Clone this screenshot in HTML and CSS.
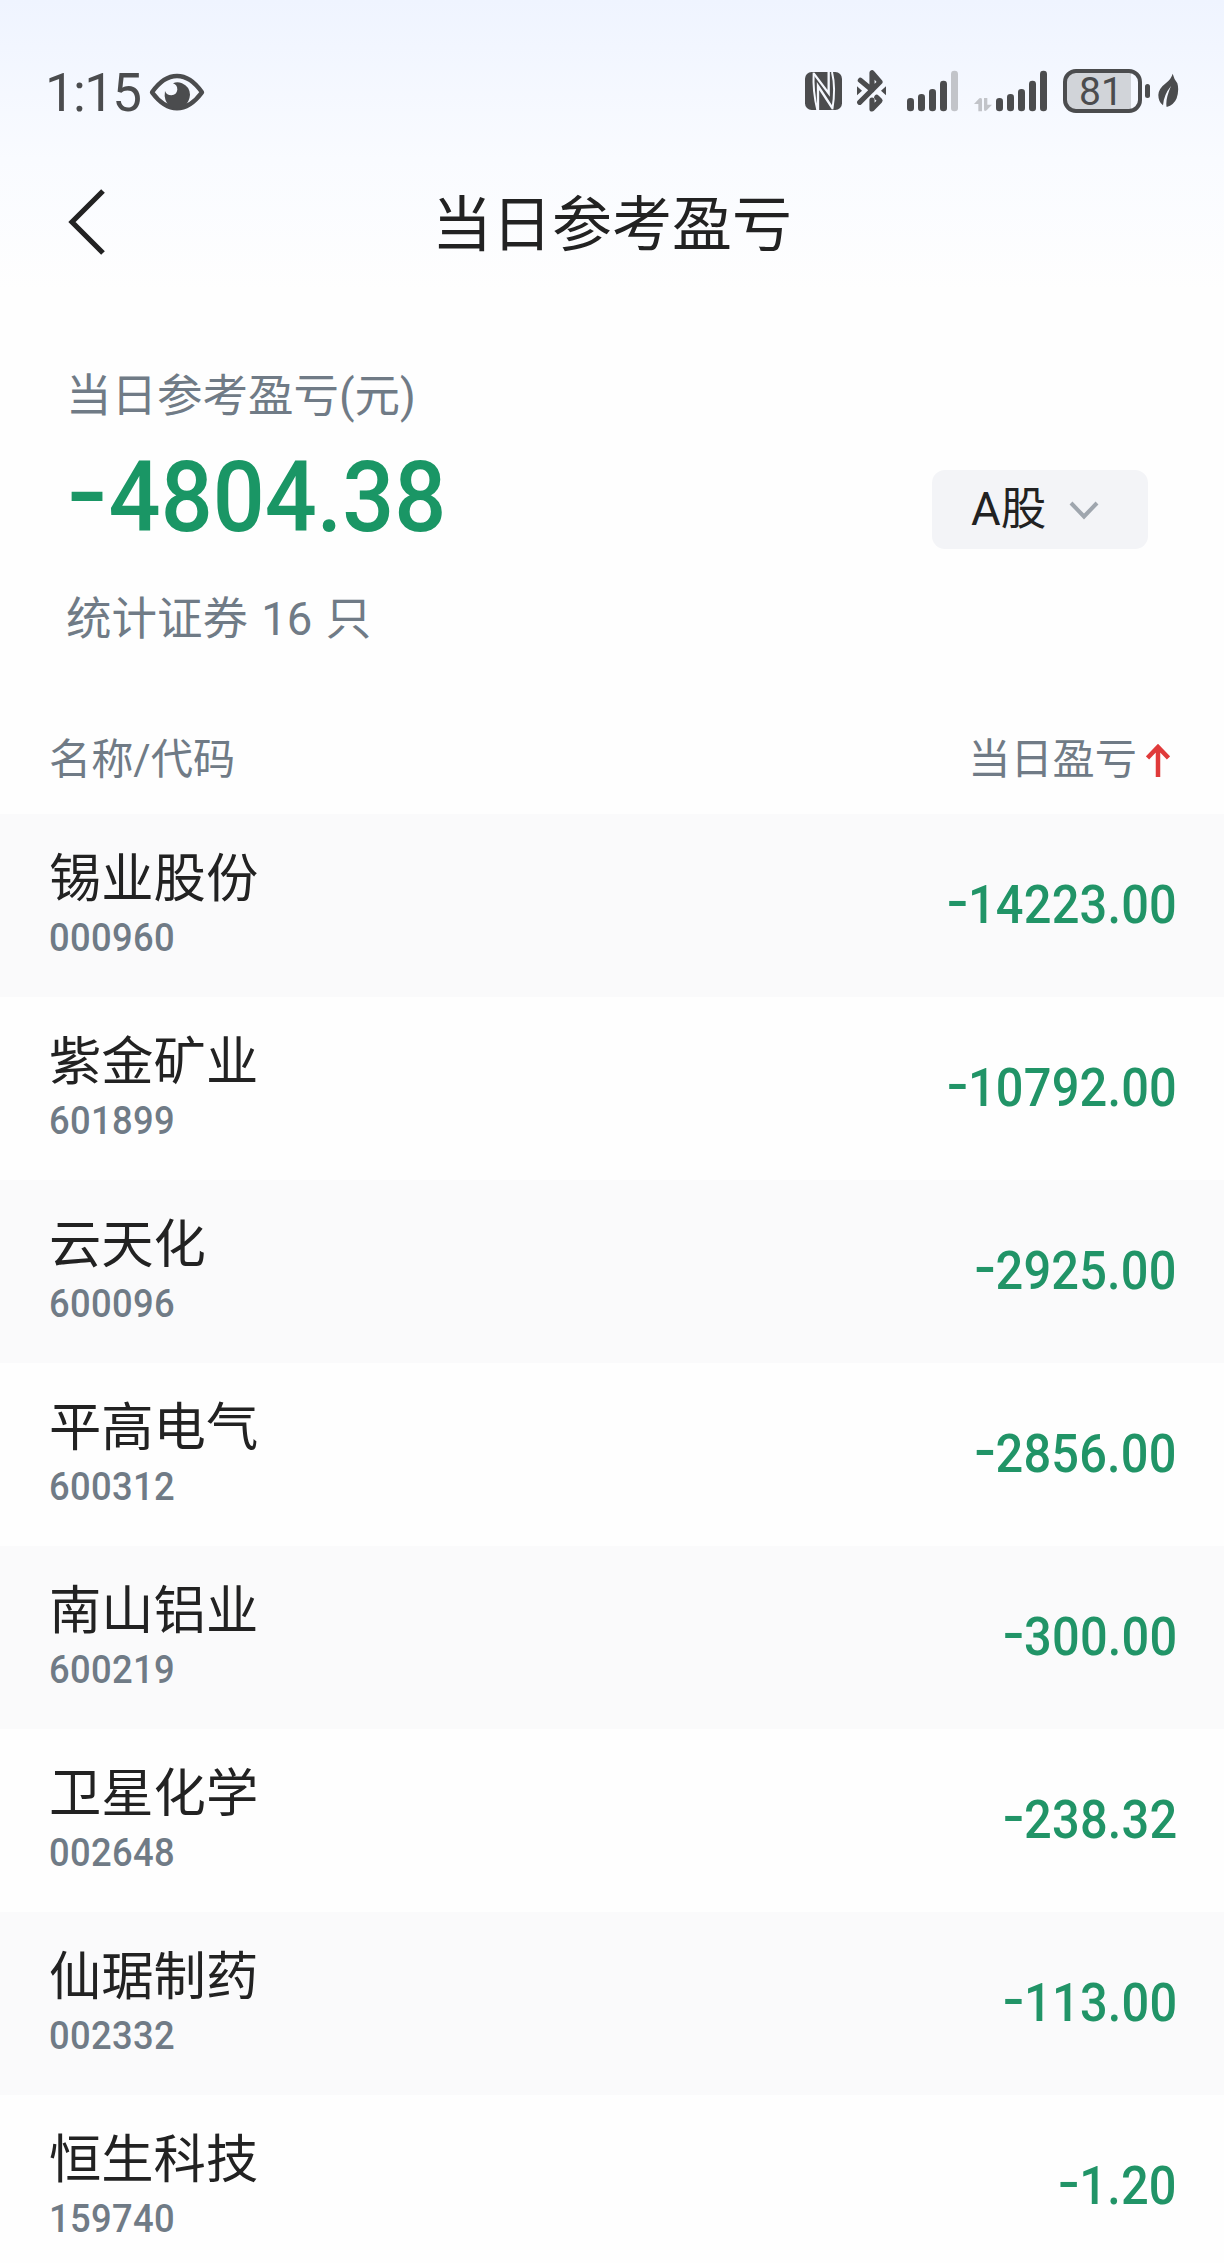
FILE: index.html
```
<!DOCTYPE html>
<html lang="zh-CN">
<head>
<meta charset="utf-8">
<title>当日参考盈亏</title>
<link rel="stylesheet" href="styles.css">
</head>
<body>
<div class="screen">
  <div class="status">
    <span class="clock">1:15</span>
    <svg class="eye" width="56" height="40" viewBox="447 92 168 120"><path d="M456 153Q490 104 531 104T606 153Q570 201 531 201T456 153Z" fill="none" stroke="#4b4c4e" stroke-width="13" stroke-linejoin="round"/><path d="M519 126Q532 120 546 126Q569 136 570 160Q569 180 552 196Q531 205 510 196Q490 178 495 149Q500 162 514 162Q530 160 532 145Q532 130 519 126Z" fill="#4b4c4e"/></svg>
    <div class="status-icons">
      <svg class="nfc" width="37" height="44" viewBox="45 57 111 132"><rect x="45" y="66" width="111" height="114" rx="20" fill="#4b4c4e"/><path d="M71 68Q68 125 82 180M126 66Q138 115 127 178" fill="none" stroke="#f5f8fe" stroke-width="6"/><path d="M71 70L116 130V66M84 180V108L127 174" fill="none" stroke="#f5f8fe" stroke-width="7"/></svg>
      <svg class="bluetooth" width="29" height="44" viewBox="201 57 87 132"><g fill="none" stroke="#4b4c4e" stroke-width="15.500" stroke-linecap="round" stroke-linejoin="round"><path d="M209 157L270 96L246 68V120L211 91"/><path d="M246 150V177L270 152L260 142"/></g><path d="M201 109L216 122L201 136ZM288 109L273 122L288 136Z" fill="#4b4c4e"/></svg>
      <svg class="signal" width="51" height="44" viewBox="351 57 153 132"><g fill="#4b4c4e"><rect x="351" y="144" width="21" height="40" rx="10"/><rect x="384" y="132" width="21" height="52" rx="10"/><rect x="417" y="117" width="21" height="67" rx="10"/><rect x="450" y="92" width="21" height="92" rx="10"/></g><rect x="483" y="62" width="21" height="122" rx="10" fill="#c2c4c9"/></svg>
      <svg class="traffic" width="18" height="44" viewBox="552 57 54 132"><path d="M552 162L568 145Q576 141 576 149V184H565V162ZM582 144H592V164H606L590 181Q582 186 582 178Z" fill="#c2c4c9"/></svg>
      <svg class="signal-two" width="51" height="44" viewBox="351 57 153 132"><g fill="#4b4c4e"><rect x="351" y="144" width="21" height="40" rx="10"/><rect x="384" y="132" width="21" height="52" rx="10"/><rect x="417" y="117" width="21" height="67" rx="10"/><rect x="450" y="92" width="21" height="92" rx="10"/><rect x="483" y="62" width="21" height="122" rx="10"/></g></svg>
      <span class="battery">81</span>
      <span class="nub"></span>
      <svg class="leaf" width="21" height="44" viewBox="473 57 63 132"><path d="M517 71Q522 90 531 100Q537 120 529 145Q521 165 499 171Q494 150 512 108Q490 135 488 166Q474 156 474 135Q474 116 498 98Q513 86 517 71Z" fill="#4b4c4e"/></svg>
    </div>
  </div>
  <header class="nav">
    <svg class="back" width="38" height="66" viewBox="0 0 38 66"><path d="M35 2L4 33L35 64" fill="none" stroke="#222" stroke-width="5.2"/></svg>
    <h1 class="title">当日参考盈亏</h1>
  </header>
  <section class="summary">
    <div class="figures">
      <div class="label">当日参考盈亏(元)</div>
      <div class="total"><span class="minus">-</span>4804.38</div>
      <div class="count">统计证券 16 只</div>
    </div>
    <button class="market">A股<svg width="30" height="20" viewBox="0 0 30 20"><path d="M2 2L15 15.5L28 2" fill="none" stroke="#9fa6ae" stroke-width="4"/></svg></button>
  </section>
  <div class="columns"><span>名称/代码</span><span class="sort">当日盈亏<svg width="24" height="34" viewBox="0 0 24 34"><path d="M12 33V3M1.500 14L12 3L22.500 14" fill="none" stroke="#e03a3a" stroke-width="4.500"/></svg></span></div>
  <ul class="list">
    <li class="row"><div><div class="name">锡业股份</div><div class="code">000960</div></div><div class="amount"><span class="minus">-</span>14223.00</div></li>
    <li class="row"><div><div class="name">紫金矿业</div><div class="code">601899</div></div><div class="amount"><span class="minus">-</span>10792.00</div></li>
    <li class="row"><div><div class="name">云天化</div><div class="code">600096</div></div><div class="amount"><span class="minus">-</span>2925.00</div></li>
    <li class="row"><div><div class="name">平高电气</div><div class="code">600312</div></div><div class="amount"><span class="minus">-</span>2856.00</div></li>
    <li class="row"><div><div class="name">南山铝业</div><div class="code">600219</div></div><div class="amount"><span class="minus">-</span>300.00</div></li>
    <li class="row"><div><div class="name">卫星化学</div><div class="code">002648</div></div><div class="amount"><span class="minus">-</span>238.32</div></li>
    <li class="row"><div><div class="name">仙琚制药</div><div class="code">002332</div></div><div class="amount"><span class="minus">-</span>113.00</div></li>
    <li class="row"><div><div class="name">恒生科技</div><div class="code">159740</div></div><div class="amount"><span class="minus">-</span>1.20</div></li>
  </ul>
</div>
</body>
</html>
```
FILE: styles.css
```
* { box-sizing: border-box; }
body { margin: 0; background: #fefefe; color: #222; font-family: Roboto, "Noto Sans CJK SC", sans-serif; }
.screen { height: 2263px; overflow: hidden; background: linear-gradient(#eff4ff 0, #f9fbff 160px, #fefefe 290px); }
.status { display: flex; align-items: center; height: 182px; padding: 0 45px 0 45px; color: #4b4c4e; }
.clock { width: 104px; font-size: 53px; line-height: 60px; letter-spacing: -1.700px; white-space: nowrap; padding-top: 4px; }
.eye { margin-top: 2px; }
.status-icons { display: flex; align-items: center; margin-left: auto; }
.bluetooth { margin-left: 15px; }
.signal { margin-left: 21px; }
.traffic { margin-left: 16px; }
.signal-two { margin-left: 4px; }
.battery { width: 79px; height: 44px; margin-left: 16px; padding-right: 3px; border: 4px solid #4b4c4e; border-radius: 13px; background: linear-gradient(90deg, #d1d4d9 64px, transparent 64px); font-size: 39px; line-height: 38px; text-align: center; }
.nub { width: 5px; height: 14px; margin-left: 3px; border-radius: 3px; background: #4b4c4e; }
.leaf { margin-left: 8px; }
.nav { display: grid; grid-template-columns: 1fr auto 1fr; align-items: center; height: 80px; padding: 0 68px; }
.title { grid-column: 2; margin: 0; padding-top: 8px; font-size: 60px; line-height: 72px; font-weight: 400; }
.summary { display: flex; justify-content: space-between; padding: 103px 76px 0 66px; height: 428px; }
.label, .count { color: #707b86; font-size: 45.500px; line-height: 60px; }
.label { padding-top: 2px; }
.total { margin-top: 16px; color: #1a9665; font-size: 98.500px; font-weight: 500; line-height: 110px; letter-spacing: 0; white-space: nowrap; transform: scaleX(0.93); transform-origin: left; }
.count { margin-top: 37px; word-spacing: 2px; }
.minus { display: inline-block; width: 0.43em; letter-spacing: 0; text-align: center; transform: translateY(-0.05em) scaleX(1.3); }
.total .minus { width: 0.465em; }
.market { display: flex; align-items: center; gap: 23px; width: 216px; height: 79px; margin-top: 105px; padding: 0 0 10px 39px; border: 0; border-radius: 13px; background: #f3f4f7; color: #222; font: inherit; font-size: 45.500px; }
.market svg { margin-top: 12px; }
.columns { display: flex; align-items: center; justify-content: space-between; height: 124px; padding: 16px 54px 0 49px; color: #707b86; font-size: 42.200px; line-height: 56px; }
.sort { display: flex; align-items: center; gap: 9px; }
.sort svg { margin-top: 2px; }
.list { margin: 0; padding: 0; list-style: none; }
.row { display: flex; justify-content: space-between; height: 183px; padding: 0 47px 0 49px; }
.row:nth-child(odd) { background: #fafafb; }
.name { margin-top: 31px; font-size: 52.300px; line-height: 68px; }
.code { color: #707b86; font-size: 39.500px; font-weight: 500; line-height: 50px; letter-spacing: 0.400px; transform: scaleX(0.92); transform-origin: left; }
.amount { color: #219467; font-size: 53px; font-weight: 500; line-height: 183px; letter-spacing: 0.200px; transform: scaleX(0.92); transform-origin: right; }
```
